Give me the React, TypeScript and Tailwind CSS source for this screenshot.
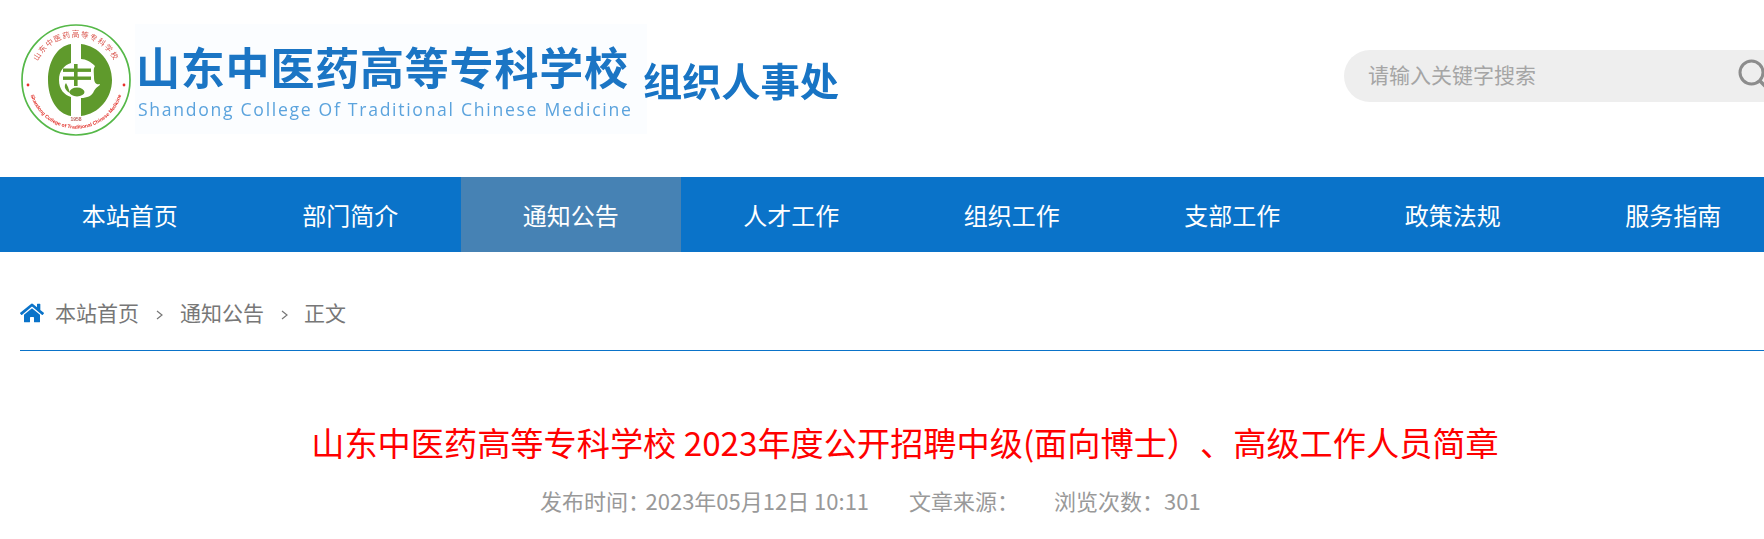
import { FaHome } from "react-icons/fa";

const CJK = "font-['Noto_Sans_CJK_SC','Microsoft_YaHei',sans-serif]";

const navItems = ["本站首页", "部门简介", "通知公告", "人才工作", "组织工作", "支部工作", "政策法规", "服务指南"];

// school seal, drawn because there is no image file
const Seal = () => (
  <svg width="110" height="112" viewBox="0 0 110 112" className="shrink-0 blur-[0.4px]">
    <defs>
      <path id="sealTop" d="M 13 62 A 42.5 42.5 0 1 1 97 62" />
      <path id="sealBottom" d="M 8 64 A 47.5 47.5 0 0 0 102 64" />
    </defs>
    <ellipse cx="55" cy="56" rx="54" ry="55" fill="#fff" stroke="#55b848" strokeWidth="1.7" />
    <text fill="#d9574f" fontSize="7.6" fontFamily="Noto Sans CJK SC" letterSpacing="1.1">
      <textPath href="#sealTop" startOffset="50%" textAnchor="middle">山东中医药高等专科学校</textPath>
    </text>
    <text fill="#e2332c" fontSize="5" fontWeight="700" fontFamily="Liberation Sans">
      <textPath href="#sealBottom" startOffset="50%" textAnchor="middle">Shandong College of Traditional Chinese Medicine</textPath>
    </text>
    <circle cx="7" cy="61" r="1.4" fill="#e8322c" />
    <circle cx="103" cy="61" r="1.4" fill="#e8322c" />
    <text x="55" y="96.5" fill="#b9605a" fontSize="5" fontWeight="700" textAnchor="middle" fontFamily="Liberation Sans">1958</text>
    {/* green C body, left and right halves */}
    <g fill="#5f9a2c">
      <path d="M50 20 C36 22 27 38 27 56 C27 74 36 90 50 92 V73 C43 71 38 65 38 56 C38 47 43 41 50 39 Z" />
      <path d="M60 20 C78 22 91 38 91 56 C91 74 78 90 60 92 V74 C66 74 71 72 73 67 C75 63 79 62 79 60 C75 61 73 59 73 53 C73 48 72 45 74 42 C70 38 65 35 60 35 Z" />
      {/* centre glyph */}
      <rect x="42" y="44.5" width="28" height="3.4" />
      <rect x="42" y="52.5" width="28" height="3.4" />
      <rect x="53" y="40" width="3.6" height="22" />
      <path d="M45 59 C42 63 45 67 49 69 L47 63 Z" />
      <ellipse cx="56" cy="68" rx="7.5" ry="4.4" />
    </g>
  </svg>
);

export default function App() {
  return (
    <div className={`w-[1764px] h-[539px] overflow-hidden bg-white ${CJK}`}>
      <div className="w-[1790px]">
        {/* header */}
        <div className="h-[177px] flex items-start pl-[21px] pt-[24px]">
          <div className="flex w-[1323px]">
            <Seal />
            <div className="ml-[4px] w-[512px] h-[110px] bg-[#fbfdff] pl-[1px] flex flex-col blur-[0.3px]">
              <div className="text-[#1b75c4] text-[44px] font-bold leading-[52px] tracking-[0.8px] mt-[16px] whitespace-nowrap">山东中医药高等专科学校</div>
              <div className="text-[#5ba3dd] text-[17.6px] leading-[22px] tracking-[1.7px] mt-[6px] pl-[2px] whitespace-nowrap font-['Open_Sans',sans-serif]">Shandong College Of Traditional Chinese Medicine</div>
            </div>
            <div className="text-[#1874c4] text-[39.2px] font-bold leading-[50px] -ml-[4px] mt-[30px] whitespace-nowrap blur-[0.3px]">组织人事处</div>
          </div>
          <div className="h-[52px] w-[446px] mt-[26px] rounded-[26px] bg-[#eeeeee] flex items-center pl-[24px] pb-[3px] shrink-0 relative">
            <span className="text-[#a5a5a5] text-[21px] leading-[49px]">请输入关键字搜索</span>
            <svg width="34" height="34" viewBox="0 0 34 34" className="absolute left-[394px] top-[9px]">
              <circle cx="13.5" cy="13.5" r="11.5" fill="none" stroke="#8c8c8c" strokeWidth="3" />
              <path d="M22 22 L31 31" stroke="#8c8c8c" strokeWidth="3.4" />
            </svg>
          </div>
        </div>

        {/* nav */}
        <div className="h-[75px] bg-[#0a73c9] pl-[19.5px] flex">
          {navItems.map((item, i) => (
            <div
              key={item}
              className={`w-[220.5px] h-full flex items-center justify-center text-white text-[24px] ${i === 2 ? "bg-[#4682b4]" : ""}`}
            >
              {item}
            </div>
          ))}
        </div>

        {/* breadcrumb */}
        <div className="ml-[20px] h-[99px] border-b border-[#0a73c9] flex items-center pt-[24px] text-[#777777] text-[21px]">
          <FaHome size={24} color="#0a73c9" className="shrink-0 mr-[11px]" />
          <span>本站首页</span>
          <span className="w-[41px] flex justify-center pt-[4px]">
            <svg width="7" height="10" viewBox="0 0 7 10"><path d="M1 1 L6 5 L1 9" fill="none" stroke="#777" strokeWidth="1.2" /></svg>
          </span>
          <span>通知公告</span>
          <span className="w-[40px] flex justify-center pt-[4px]">
            <svg width="7" height="10" viewBox="0 0 7 10"><path d="M1 1 L6 5 L1 9" fill="none" stroke="#777" strokeWidth="1.2" /></svg>
          </span>
          <span>正文</span>
        </div>

        {/* article head */}
        <div className="ml-[20px] w-[1770px] text-center">
          <h1 className="text-[#ff0000] text-[33.2px] leading-[48px] font-normal mt-[67px] [text-spacing-trim:space-all]">山东中医药高等专科学校 2023年度公开招聘中级(面向博士）、高级工作人员简章</h1>
          <div className="text-[#999999] text-[22px] leading-[30px] mt-[19px] flex pl-[520px] [text-spacing-trim:space-all] whitespace-nowrap">
            <span className="-mr-[4.5px]">发布时间：</span>
            <span>2023年05月12日 10:11</span>
            <span className="ml-[40px] w-[145px] text-left">文章来源：</span>
            <span>浏览次数：301</span>
          </div>
        </div>
      </div>
    </div>
  );
}
